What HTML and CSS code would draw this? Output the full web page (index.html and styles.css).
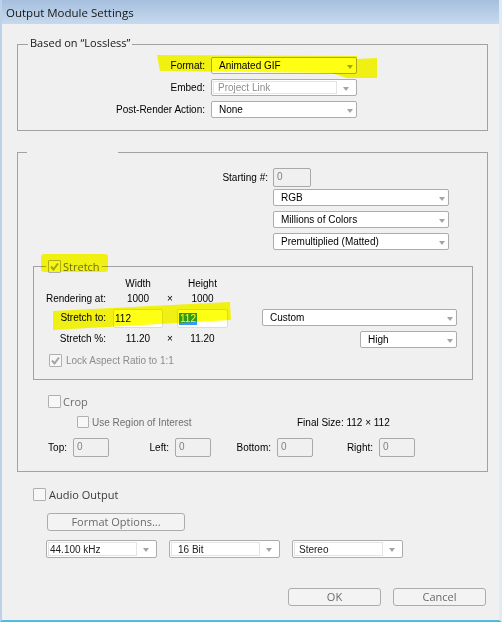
FILE: index.html
```html
<!DOCTYPE html>
<html lang="en">
<head>
<meta charset="utf-8">
<title>Output Module Settings</title>
<link rel="stylesheet" href="styles.css">
</head>
<body>
<div class="window">
  <div class="titlebar">Output Module Settings</div>
  <div class="content">

    <div class="group g1">
      <div class="legend">Based on “Lossless”</div>
      <div class="rows">
        <span class="lbl">Format:</span>
        <div class="select"><span class="val">Animated GIF</span><i class="arr"></i></div>
        <span class="lbl">Embed:</span>
        <div class="select split disabled"><span class="field">Project Link</span><span class="arrbox"><i class="arr"></i></span></div>
        <span class="lbl">Post-Render Action:</span>
        <div class="select"><span class="val">None</span><i class="arr"></i></div>
      </div>
    </div>

    <div class="group g2">
      <div class="gap"></div>
      <div class="opts">
        <span class="lbl">Starting #:</span>
        <div class="tinput w38">0</div>
        <div class="select first"><span class="val">RGB</span><i class="arr"></i></div>
        <div class="select"><span class="val">Millions of Colors</span><i class="arr"></i></div>
        <div class="select"><span class="val">Premultiplied (Matted)</span><i class="arr"></i></div>
      </div>

      <div class="group stretch">
        <div class="cblegend">
          <span class="cb"><svg viewBox="0 0 11 11" width="11" height="11"><polyline points="2,5.5 4.5,8.5 9,2.5" fill="none" stroke="#a3a3a3" stroke-width="2"/></svg></span>
          <span class="big muted">Stretch</span>
        </div>
        <div class="sgrid">
          <span class="c3 ctr">Width</span>
          <span class="c5 ctr">Height</span>

          <span class="c1 lbl">Rendering at:</span>
          <span class="c3 ctr">1000</span>
          <span class="c4 ctr">×</span>
          <span class="c5 ctr">1000</span>

          <span class="c1 lbl">Stretch to:</span>
          <div class="c3 tinput white">112</div>
          <div class="c5 tinput white"><span class="sel">112</span></div>
          <div class="c7 select custom"><span class="val">Custom</span><i class="arr"></i></div>

          <span class="c1 lbl">Stretch %:</span>
          <span class="c3 ctr">11.20</span>
          <span class="c4 ctr">×</span>
          <span class="c5 ctr">11.20</span>
          <div class="c7 select high"><span class="val">High</span><i class="arr"></i></div>
        </div>
        <div class="cbrow lock">
          <span class="cb"><svg viewBox="0 0 11 11" width="11" height="11"><polyline points="2,5.5 4.5,8.5 9,2.5" fill="none" stroke="#a3a3a3" stroke-width="2"/></svg></span>
          <span class="gray">Lock Aspect Ratio to 1:1</span>
        </div>
      </div>

      <div class="cbrow crop">
        <span class="cb"></span>
        <span class="big muted">Crop</span>
      </div>
      <div class="roirow">
        <span class="cb small"></span>
        <span class="roitext">Use Region of Interest</span>
        <span>Final Size: 112 × 112</span>
      </div>
      <div class="tlbr">
        <span class="lbl">Top:</span><div class="tinput">0</div>
        <span class="lbl">Left:</span><div class="tinput">0</div>
        <span class="lbl">Bottom:</span><div class="tinput">0</div>
        <span class="lbl">Right:</span><div class="tinput">0</div>
      </div>
    </div>

    <div class="cbrow audio">
      <span class="cb"></span>
      <span class="big dark">Audio Output</span>
    </div>
    <div class="btn fo">Format Options...</div>
    <div class="audiosel">
      <div class="select split khz"><span class="field">44.100 kHz</span><span class="arrbox"><i class="arr"></i></span></div>
      <div class="select split bit"><span class="field">16 Bit</span><span class="arrbox"><i class="arr"></i></span></div>
      <div class="select split"><span class="field">Stereo</span><span class="arrbox"><i class="arr"></i></span></div>
    </div>
    <div class="actions">
      <div class="btn">OK</div>
      <div class="btn">Cancel</div>
    </div>
  </div>

  <div class="hl hl-format"></div>
  <div class="hl hl-stretch"></div>
  <div class="hl hl-stretchto"></div>
</div>
</body>
</html>
```

FILE: styles.css
```css
* { box-sizing: border-box; }
html, body { margin: 0; padding: 0; background: #f0f0f0; }
body {
  font-family: "Liberation Sans", Arial, sans-serif;
  font-size: 10px;
  color: #000;
}
.window {
  position: relative;
  width: 502px;
  height: 622px;
  overflow: hidden;
  background: #f0f0f0;
  border-left: 2px solid #bdd2e9;
  border-right: 3px solid #e2eaf3;
  border-bottom: 2px solid #4fbde0;
}
.titlebar {
  height: 24px;
  padding-left: 4px;
  background: linear-gradient(#a6bfdc, #c6daef);
  font-family: "Open Sans", sans-serif;
  font-size: 11.5px;
  line-height: 25px;
  color: #151515;
}
.content { padding: 20px 0 0 15px; }

.group { border: 1px solid #a2a2a2; }
.g1 { width: 471px; height: 87px; }
.g2 { width: 471px; height: 320px; margin-top: 21px; }

.legend {
  display: table;
  margin: -10px 0 0 10px;
  padding: 0 2px;
  background: #f0f0f0;
  font-family: "Open Sans", sans-serif;
  font-size: 11px;
  line-height: 16px;
  color: #151515;
}
.gap {
  width: 91px;
  height: 3px;
  margin: -2px 0 -1px 9px;
  background: #f0f0f0;
}

.lbl { text-align: right; white-space: nowrap; }
.ctr { text-align: center; white-space: nowrap; }
.big { font-family: "Open Sans", sans-serif; font-size: 11px; line-height: 13px; }
.muted { color: #6d6d6d; }
.dark { color: #3a3a3a; }
.gray { color: #8c8c8c; }

.rows {
  display: grid;
  grid-template-columns: 187px 146px;
  grid-auto-rows: 17px;
  column-gap: 6px;
  row-gap: 5px;
  margin-top: 6px;
  align-items: center;
}

/* select boxes */
.select {
  display: flex;
  align-items: center;
  height: 17px;
  background: #fff;
  border: 1px solid #acacac;
  border-radius: 2px;
  padding-left: 7px;
  white-space: nowrap;
}
.select .val { flex: 1; overflow: hidden; }
.arr {
  display: block;
  width: 0;
  height: 0;
  border-left: 3.5px solid transparent;
  border-right: 3.5px solid transparent;
  border-top: 4px solid #a4a4a4;
  margin: 2px 3px 0 0;
}
.select.split { padding: 1px; }
.select.split .field {
  flex: 1;
  align-self: stretch;
  display: flex;
  align-items: center;
  border: 1px solid #e4e4e4;
  padding-left: 4px;
  color: #222;
}
.select.split .arrbox { width: 18px; display: flex; justify-content: center; }
.select.split .arrbox .arr { margin: 2px 0 0 0; }
.select.disabled .field { color: #8e8e8e; }

/* text inputs */
.tinput {
  height: 19px;
  border: 1px solid #a9a9a9;
  border-radius: 2px;
  background: #f0f0f0;
  color: #808080;
  padding-left: 3px;
  line-height: 15px;
}
.tinput.white {
  background: #fff;
  border-color: #dcdcdc;
  color: #000;
  padding-left: 1px;
  line-height: 17px;
}
.sel {
  display: inline-block;
  background: #3399ff;
  color: #fff;
  line-height: 12px;
  padding: 0 1px;
  vertical-align: middle;
}
.w38 { width: 38px; }

/* starting # and colour options */
.opts {
  display: grid;
  grid-template-columns: 250px 176px;
  column-gap: 5px;
  margin-top: 15px;
}
.opts .lbl { align-self: center; }
.opts .select { grid-column: 2; margin-top: 5px; }
.opts .select.first { margin-top: 2px; }

/* stretch */
.stretch { width: 440px; height: 114px; margin: 16px 0 0 15px; }
.cblegend {
  display: flex;
  align-items: center;
  width: max-content;
  height: 16px;
  margin: -9px 0 0 12px;
  padding: 0 2px;
  background: #f0f0f0;
}
.cblegend .big { margin-left: 2px; }
.sgrid {
  display: grid;
  grid-template-columns: 72px 7px 50px 14px 51px 34px 195px;
  grid-template-rows: 15px 15px 22px 20px;
  align-items: center;
  margin-top: 2px;
}
.c1 { grid-column: 1; }
.c3 { grid-column: 3; }
.c4 { grid-column: 4; }
.c5 { grid-column: 5; }
.c7 { grid-column: 7; }
.sgrid .tinput { align-self: end; }
.sgrid .custom { align-self: start; margin-top: 3px; }
.sgrid .high { align-self: end; justify-self: end; width: 97px; }

/* checkboxes */
.cb {
  display: flex;
  align-items: center;
  justify-content: center;
  flex: none;
  width: 13px;
  height: 13px;
  border: 1px solid #b0b0b0;
  border-radius: 1px;
  background: #f7f7f7;
}
.cb.small { width: 12px; height: 12px; }
.cbrow { display: flex; align-items: center; height: 13px; }
.cbrow .cb + span { margin-left: 3px; }
.lock { margin: 6px 0 0 15px; }
.lock .cb + span { margin-left: 4px; }
.crop { margin: 15px 0 0 30px; }
.crop .cb + span { margin-left: 2px; }

.roirow {
  display: flex;
  align-items: center;
  height: 12px;
  margin-top: 8px;
  padding-left: 59px;
}
.roitext { width: 205px; margin-left: 3px; color: #6f6f6f; }

.tlbr {
  display: grid;
  grid-template-columns: 55px 36px 66px 36px 66px 36px 66px 36px;
  align-items: center;
  margin-top: 10px;
}
.tlbr .lbl { padding-right: 6px; }

/* audio */
.audio { margin: 16px 0 0 16px; }
.btn {
  height: 18px;
  border: 1px solid #acacac;
  border-radius: 3px;
  background: #f3f3f3;
  font-family: "Open Sans", sans-serif;
  font-size: 11px;
  line-height: 16px;
  color: #6a6a6a;
  text-align: center;
}
.fo { width: 138px; margin: 12px 0 0 30px; }
.audiosel { display: flex; gap: 12px; margin: 9px 0 0 29px; }
.audiosel .select { width: 111px; height: 18px; }
.audiosel .khz .field { padding-left: 1px; }
.audiosel .bit .field { padding-left: 6px; }
.actions { display: flex; gap: 12px; margin: 30px 0 0 271px; }
.actions .btn { width: 93px; }

/* highlighter marks over the dialog */
.hl {
  position: absolute;
  background: #ffff14;
  mix-blend-mode: multiply;
}
.hl-format {
  left: 155px;
  top: 54px;
  width: 221px;
  height: 24px;
  clip-path: polygon(0 1px, 200px 2px, 200px 5px, 220px 4px, 220px 24px, 190px 24px, 175px 19px, 3px 17px);
}
.hl-stretch {
  left: 39px;
  top: 254px;
  width: 67px;
  height: 18px;
  border-radius: 3px;
}
.hl-stretchto {
  left: 50px;
  top: 301px;
  width: 180px;
  height: 30px;
  clip-path: polygon(1px 10px, 178px 1px, 179px 19px, 1px 29px);
}
```
